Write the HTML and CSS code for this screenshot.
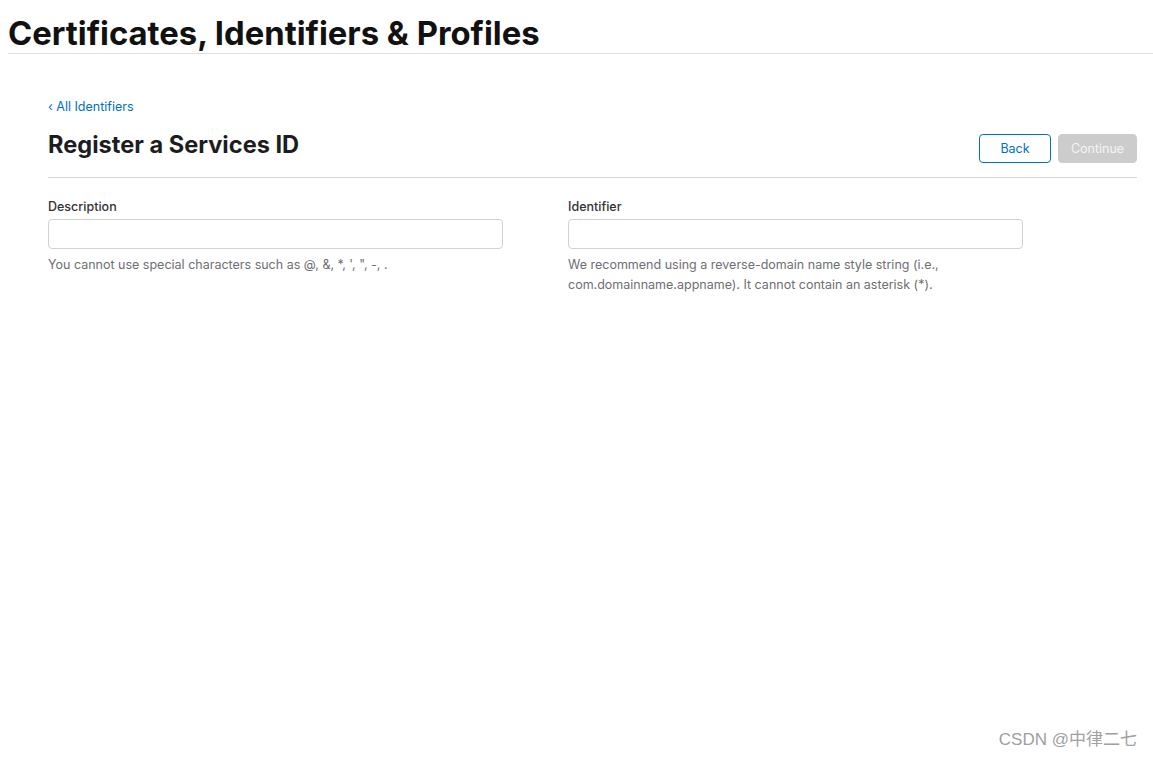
FILE: index.html
```html
<!DOCTYPE html>
<html>
<head>
<meta charset="utf-8">
<link rel="stylesheet" href="styles.css">
</head>
<body>
<header class="top">
  <h1 class="site-title">Certificates, Identifiers &amp; Profiles</h1>
</header>
<main class="content">
  <a class="back-link" href="#">‹ All Identifiers</a>
  <div class="title-row">
    <h2 class="page-title">Register a Services ID</h2>
    <div class="actions">
      <button class="btn btn-back">Back</button>
      <button class="btn btn-continue" disabled>Continue</button>
    </div>
  </div>
  <div class="fields">
    <div class="field">
      <label class="label">Description</label>
      <input class="input" type="text">
      <p class="help">You cannot use special characters such as @, &amp;, *, ', ", -, .</p>
    </div>
    <div class="field">
      <label class="label">Identifier</label>
      <input class="input" type="text">
      <p class="help">We recommend using a reverse-domain name style string (i.e., com.domainname.appname). It cannot contain an asterisk (*).</p>
    </div>
  </div>
</main>
<div class="watermark">CSDN @中律二七</div>
</body>
</html>
```
FILE: styles.css
```css
html, body { margin: 0; padding: 0; background: #fff; }
body {
  font-family: Inter, "Liberation Sans", "Noto Sans CJK SC", sans-serif;
  color: #1d1d1f;
  height: 757px;
  position: relative;
}
.top {
  margin-left: 8px;
  border-bottom: 1px solid #e0e0e0;
  height: 53px;
}
.site-title {
  margin: 0;
  padding-top: 14px;
  font-size: 32.8px;
  line-height: 38px;
  font-weight: 700;
  color: #111;
}
.content {
  margin: 0 16px 0 48px;
  padding-top: 45px;
}
.back-link {
  display: block;
  font-size: 12.5px;
  line-height: 16px;
  color: #0070c9;
  text-decoration: none;
}
.title-row {
  display: flex;
  justify-content: space-between;
  align-items: flex-start;
  margin-top: 12px;
  padding-bottom: 14px;
  border-bottom: 1px solid #d6d6d6;
}
.page-title {
  margin: 0;
  padding-top: 9px;
  font-size: 23.6px;
  line-height: 18px;
  font-weight: 700;
  color: #1d1d1f;
}
.actions {
  display: flex;
  gap: 7px;
  margin-top: 7px;
}
.btn {
  font-family: inherit;
  font-size: 12.5px;
  height: 29px;
  border-radius: 4px;
  padding: 0;
}
.btn-back {
  width: 72px;
  background: #fff;
  border: 1px solid #0070c9;
  color: #0070c9;
}
.btn-continue {
  width: 79px;
  background: #cccccc;
  border: 1px solid #cccccc;
  color: #f4f4f4;
}
.fields {
  display: flex;
  gap: 65px;
  margin-top: 21px;
}
.field {
  width: 455px;
  display: flex;
  flex-direction: column;
}
.label {
  font-size: 12.5px;
  line-height: 16px;
  font-weight: 500;
  color: #333;
}
.input {
  box-sizing: border-box;
  margin-top: 4px;
  height: 30px;
  width: 455px;
  border: 1px solid #d2d2d2;
  border-radius: 4px;
  outline: none;
}
.help {
  margin: 6px 0 0;
  font-size: 12.5px;
  line-height: 20px;
  color: #6e6e73;
}
.watermark {
  position: absolute;
  right: 16px;
  bottom: 7px;
  font-size: 17px;
  color: #a0a0a0;
  font-family: "Liberation Sans", "Noto Sans CJK SC", sans-serif;
}
```
